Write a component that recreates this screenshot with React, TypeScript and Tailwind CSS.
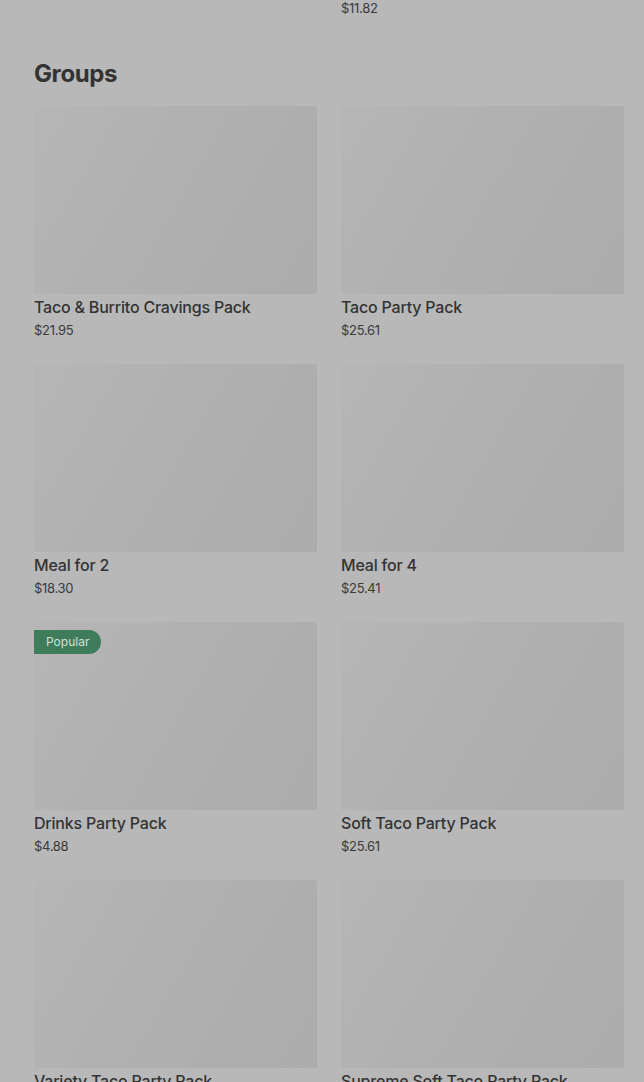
const items = [
  { name: "Taco & Burrito Cravings Pack", price: "$21.95" },
  { name: "Taco Party Pack", price: "$25.61" },
  { name: "Meal for 2", price: "$18.30" },
  { name: "Meal for 4", price: "$25.41" },
  { name: "Drinks Party Pack", price: "$4.88", popular: true },
  { name: "Soft Taco Party Pack", price: "$25.61" },
  { name: "Variety Taco Party Pack", price: "$25.61" },
  { name: "Supreme Soft Taco Party Pack", price: "$25.61" },
];

const Card = ({ name, price, popular }: { name: string; price: string; popular?: boolean }) => (
  <div className="flex flex-col">
    <div className="relative h-[188px] rounded-[2px] bg-[linear-gradient(120deg,#b6b6b6_0%,#b1b1b1_40%,#aeaeae_70%,#acacac_100%)]">
      {popular && (
        <span className="absolute left-0 top-[8px] flex h-[24px] items-center rounded-r-full bg-[#3f7c5c] pl-[12px] pr-[12px] text-[12px] text-[#cfe0d5]">
          Popular
        </span>
      )}
    </div>
    <p className="mt-[3px] text-[16px] font-medium leading-[20px] tracking-[-0.2px] text-[#333333]">{name}</p>
    <p className="mt-[3px] text-[13px] leading-[20px] tracking-[-0.3px] text-[#3a3a3a]">{price}</p>
  </div>
);

export default function App() {
  return (
    <div className="min-h-[1082px] overflow-hidden bg-[#b8b8b8] pl-[34px] pr-[20px] font-['Inter',sans-serif]">
      <div className="-mt-[2px] grid grid-cols-2 gap-x-[24px]">
        <div />
        <p className="text-[13px] leading-[20px] tracking-[-0.3px] text-[#3a3a3a]">$11.82</p>
      </div>
      <h2 className="mt-[40px] text-[24px] font-bold leading-[32px] tracking-[-0.4px] text-[#333333]">Groups</h2>
      <div className="mt-[16px] grid grid-cols-2 gap-x-[24px] gap-y-[24px]">
        {items.map((it) => (
          <Card key={it.name} {...it} />
        ))}
      </div>
    </div>
  );
}
